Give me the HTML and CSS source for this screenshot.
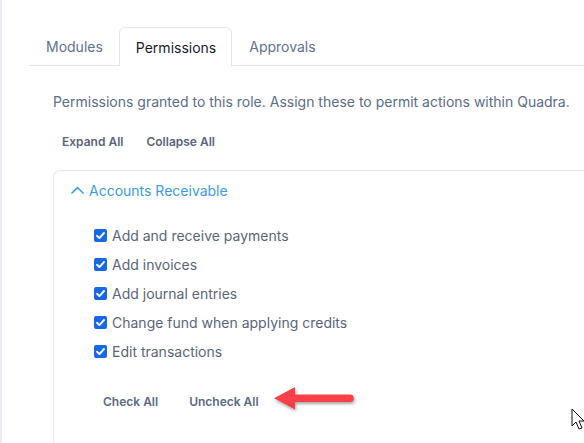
FILE: index.html
```html
<!DOCTYPE html>
<html>
<head>
<meta charset="utf-8">
<link rel="stylesheet" href="styles.css">
</head>
<body>
<div class="shell">
  <div class="tabs">
    <div class="tab">Modules</div>
    <div class="tab active">Permissions</div>
    <div class="tab">Approvals</div>
  </div>
  <div class="content">
    <p class="desc">Permissions granted to this role. Assign these to permit actions within Quadra.</p>
    <div class="toolbar">
      <button class="link-btn">Expand All</button>
      <button class="link-btn">Collapse All</button>
    </div>
    <div class="card">
      <div class="card-head">
        <svg class="chev" width="13" height="8" viewBox="0 0 13 8"><path d="M1 7 L6.5 1.5 L12 7" fill="none" stroke="#3d9be3" stroke-width="1.6" stroke-linecap="round" stroke-linejoin="round"/></svg>
        <span>Accounts Receivable</span>
      </div>
      <ul class="perms">
        <li><span class="cb"><svg width="13" height="13" viewBox="0 0 13 13"><path d="M3 6.8 L5.4 9.1 L10 4" fill="none" stroke="#fff" stroke-width="1.9" stroke-linecap="round" stroke-linejoin="round"/></svg></span>Add and receive payments</li>
        <li><span class="cb"><svg width="13" height="13" viewBox="0 0 13 13"><path d="M3 6.8 L5.4 9.1 L10 4" fill="none" stroke="#fff" stroke-width="1.9" stroke-linecap="round" stroke-linejoin="round"/></svg></span>Add invoices</li>
        <li><span class="cb"><svg width="13" height="13" viewBox="0 0 13 13"><path d="M3 6.8 L5.4 9.1 L10 4" fill="none" stroke="#fff" stroke-width="1.9" stroke-linecap="round" stroke-linejoin="round"/></svg></span>Add journal entries</li>
        <li><span class="cb"><svg width="13" height="13" viewBox="0 0 13 13"><path d="M3 6.8 L5.4 9.1 L10 4" fill="none" stroke="#fff" stroke-width="1.9" stroke-linecap="round" stroke-linejoin="round"/></svg></span>Change fund when applying credits</li>
        <li><span class="cb"><svg width="13" height="13" viewBox="0 0 13 13"><path d="M3 6.8 L5.4 9.1 L10 4" fill="none" stroke="#fff" stroke-width="1.9" stroke-linecap="round" stroke-linejoin="round"/></svg></span>Edit transactions</li>
      </ul>
      <div class="card-actions">
        <button class="link-btn">Check All</button>
        <button class="link-btn">Uncheck All</button>
      </div>
    </div>
  </div>
</div>
<svg class="arrow" width="90" height="34" viewBox="0 0 90 34">
  <defs>
    <filter id="sh" x="-20%" y="-40%" width="140%" height="180%">
      <feDropShadow dx="1" dy="2" stdDeviation="1.5" flood-color="#000" flood-opacity="0.35"/>
    </filter>
  </defs>
  <g filter="url(#sh)">
    <path d="M22 12.5 L79 12.5 A3.8 3.8 0 0 1 79 20.1 L22 20.1 Z" fill="#f9414a"/>
    <path d="M3 16.3 L24 5 L24 27.6 Z" fill="#f9414a"/>
  </g>
</svg>
<svg class="cursor" width="16" height="26" viewBox="0 0 16 26">
  <path d="M1 1 L1 18 L5 14 L8 21 L11 20 L8 13 L13 13 Z" fill="#fff" stroke="#111" stroke-width="1" stroke-linejoin="miter"/>
</svg>
</body>
</html>
```
FILE: styles.css
```css
html, body {
  margin: 0;
  padding: 0;
  background: #fff;
  height: 100%;
  overflow: hidden;
}
body {
  font-family: Inter, "Noto Sans", sans-serif;
  position: relative;
}
.shell {
  border-left: 2px solid #e8edf3;
  height: 100%;
  box-sizing: border-box;
  padding: 27px 0 0 27px;
}
.tabs {
  display: flex;
  border-bottom: 1px solid #e3e7ed;
  height: 38px;
}
.tab {
  padding: 0 17px;
  font-size: 14px;
  color: #61728c;
  display: flex;
  align-items: center;
}
.tab:first-child {
  padding-right: 16px;
}
.tab.active {
  color: #161b2e;
  background: #fff;
  border: 1px solid #e3e7ed;
  border-bottom: none;
  border-radius: 6px 6px 0 0;
  margin-bottom: -1px;
  height: 38px;
  padding: 0 15px 0 16px;
}
.content {
  padding-left: 24px;
}
.desc {
  margin: 26px 0 0;
  font-size: 14px;
  line-height: 20px;
  color: #5c6d86;
}
.toolbar {
  display: flex;
  margin-top: 20px;
  gap: 5px;
}
.link-btn {
  background: none;
  border: none;
  font-family: Inter, "Noto Sans", sans-serif;
  font-weight: 600;
  font-size: 12px;
  color: #5a6579;
  padding: 0 9px;
  height: 20px;
  line-height: 20px;
  cursor: pointer;
}
.card {
  margin-top: 18px;
  border: 1px solid #e4e8ee;
  border-right: none;
  border-bottom: none;
  border-radius: 7px 0 0 0;
  padding: 9px 0 0 17px;
  height: 400px;
}
.card-head {
  display: flex;
  align-items: center;
  gap: 5px;
  height: 20px;
  font-size: 14px;
  color: #3d9be3;
}
.chev {
  margin-top: -1px;
}
.perms {
  list-style: none;
  margin: 25px 0 0;
  padding: 0 0 0 23px;
}
.perms li {
  display: flex;
  align-items: center;
  height: 20px;
  margin-bottom: 9px;
  font-size: 14px;
  color: #5a6579;
}
.cb {
  width: 13px;
  height: 13px;
  border-radius: 2px;
  background: #1668e3;
  margin-right: 5px;
  display: flex;
}
.card-actions {
  display: flex;
  gap: 13px;
  margin-top: 31px;
  padding-left: 23px;
}
.card-actions .link-btn {
  color: #5a6b84;
}
.arrow {
  position: absolute;
  left: 271px;
  top: 382px;
}
.cursor {
  position: absolute;
  left: 571px;
  top: 408px;
}
```
